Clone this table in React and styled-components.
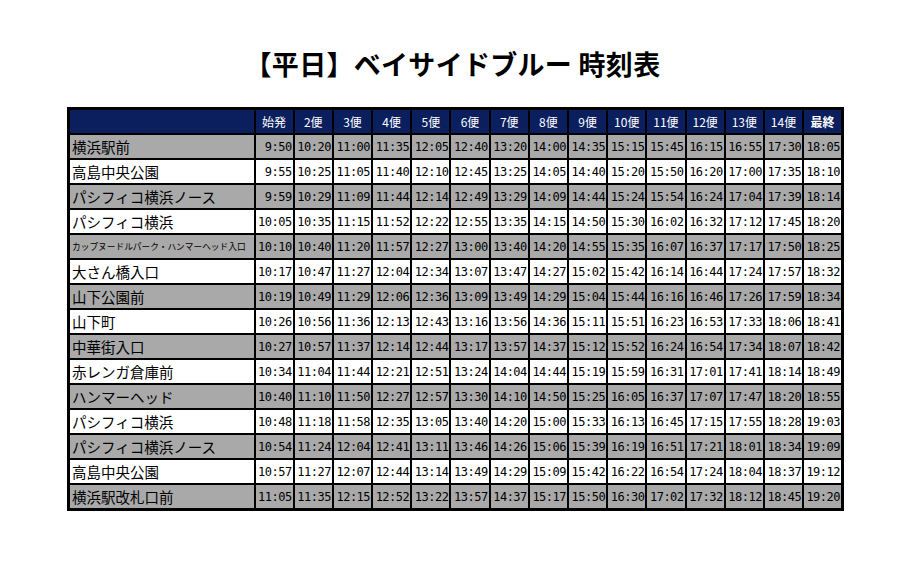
import styled, { createGlobalStyle } from "styled-components";

const GlobalStyle = createGlobalStyle`
  html, body {
    margin: 0;
    padding: 0;
    background: #ffffff;
  }
  body {
    font-family: "Noto Sans CJK JP", "Noto Sans", sans-serif;
    color: #000;
  }
`;

const Page = styled.div`
  width: 905px;
  height: 584px;
  display: flex;
  flex-direction: column;
  align-items: flex-start;
  padding: 50px 0 0 67px;
  box-sizing: border-box;
`;

const Title = styled.h1`
  align-self: stretch;
  margin: 0 0 30px -67px;
  font-size: 27px;
  line-height: 27px;
  font-weight: 700;
  text-align: center;
  letter-spacing: 0.3px;
`;

const Table = styled.table`
  width: 777px;
  table-layout: fixed;
  border-collapse: collapse;
  border: 3px solid #000;
`;

const NameCol = styled.col`
  width: 186px;
`;

const HeadCell = styled.th`
  height: 23px;
  padding: 0;
  background: #0b1f5e;
  color: #fff;
  font-size: 12px;
  font-weight: ${(p) => (p.$strong ? 700 : 400)};
  text-align: center;
  border: 2px solid #000;
`;

const Row = styled.tr`
  background: ${(p) => (p.$shaded ? "#a9a9a9" : "#ffffff")};
`;

const NameCell = styled.td`
  height: 23px;
  padding: 0 0 0 2px;
  font-size: ${(p) => (p.$small ? "8.7px" : "14.5px")};
  white-space: nowrap;
  overflow: hidden;
  border: 2px solid #000;
`;

const TimeCell = styled.td`
  padding: 0 1px 0 0;
  font-family: "DejaVu Sans Mono", "Liberation Mono", monospace;
  font-size: 12px;
  letter-spacing: -0.5px;
  text-align: right;
  white-space: nowrap;
  border: 2px solid #000;
`;

const heads = ["始発", "2便", "3便", "4便", "5便", "6便", "7便", "8便", "9便", "10便", "11便", "12便", "13便", "14便", "最終"];

const stops = [
  ["横浜駅前", "9:50 10:20 11:00 11:35 12:05 12:40 13:20 14:00 14:35 15:15 15:45 16:15 16:55 17:30 18:05"],
  ["高島中央公園", "9:55 10:25 11:05 11:40 12:10 12:45 13:25 14:05 14:40 15:20 15:50 16:20 17:00 17:35 18:10"],
  ["パシフィコ横浜ノース", "9:59 10:29 11:09 11:44 12:14 12:49 13:29 14:09 14:44 15:24 15:54 16:24 17:04 17:39 18:14"],
  ["パシフィコ横浜", "10:05 10:35 11:15 11:52 12:22 12:55 13:35 14:15 14:50 15:30 16:02 16:32 17:12 17:45 18:20"],
  ["カップヌードルパーク・ハンマーヘッド入口", "10:10 10:40 11:20 11:57 12:27 13:00 13:40 14:20 14:55 15:35 16:07 16:37 17:17 17:50 18:25"],
  ["大さん橋入口", "10:17 10:47 11:27 12:04 12:34 13:07 13:47 14:27 15:02 15:42 16:14 16:44 17:24 17:57 18:32"],
  ["山下公園前", "10:19 10:49 11:29 12:06 12:36 13:09 13:49 14:29 15:04 15:44 16:16 16:46 17:26 17:59 18:34"],
  ["山下町", "10:26 10:56 11:36 12:13 12:43 13:16 13:56 14:36 15:11 15:51 16:23 16:53 17:33 18:06 18:41"],
  ["中華街入口", "10:27 10:57 11:37 12:14 12:44 13:17 13:57 14:37 15:12 15:52 16:24 16:54 17:34 18:07 18:42"],
  ["赤レンガ倉庫前", "10:34 11:04 11:44 12:21 12:51 13:24 14:04 14:44 15:19 15:59 16:31 17:01 17:41 18:14 18:49"],
  ["ハンマーヘッド", "10:40 11:10 11:50 12:27 12:57 13:30 14:10 14:50 15:25 16:05 16:37 17:07 17:47 18:20 18:55"],
  ["パシフィコ横浜", "10:48 11:18 11:58 12:35 13:05 13:40 14:20 15:00 15:33 16:13 16:45 17:15 17:55 18:28 19:03"],
  ["パシフィコ横浜ノース", "10:54 11:24 12:04 12:41 13:11 13:46 14:26 15:06 15:39 16:19 16:51 17:21 18:01 18:34 19:09"],
  ["高島中央公園", "10:57 11:27 12:07 12:44 13:14 13:49 14:29 15:09 15:42 16:22 16:54 17:24 18:04 18:37 19:12"],
  ["横浜駅改札口前", "11:05 11:35 12:15 12:52 13:22 13:57 14:37 15:17 15:50 16:30 17:02 17:32 18:12 18:45 19:20"],
];

export default function App() {
  return (
    <>
      <GlobalStyle />
      <Page>
        <Title>【平日】ベイサイドブルー 時刻表</Title>
        <Table>
          <colgroup>
            <NameCol />
            {heads.map((h) => (
              <col key={h} />
            ))}
          </colgroup>
          <thead>
            <tr>
              <HeadCell />
              {heads.map((h) => (
                <HeadCell key={h} $strong={h === "最終"}>
                  {h}
                </HeadCell>
              ))}
            </tr>
          </thead>
          <tbody>
            {stops.map(([name, times], i) => (
              <Row key={i} $shaded={i % 2 === 0}>
                <NameCell $small={name.length > 15}>{name}</NameCell>
                {times.split(" ").map((t, j) => (
                  <TimeCell key={j}>{t}</TimeCell>
                ))}
              </Row>
            ))}
          </tbody>
        </Table>
      </Page>
    </>
  );
}
